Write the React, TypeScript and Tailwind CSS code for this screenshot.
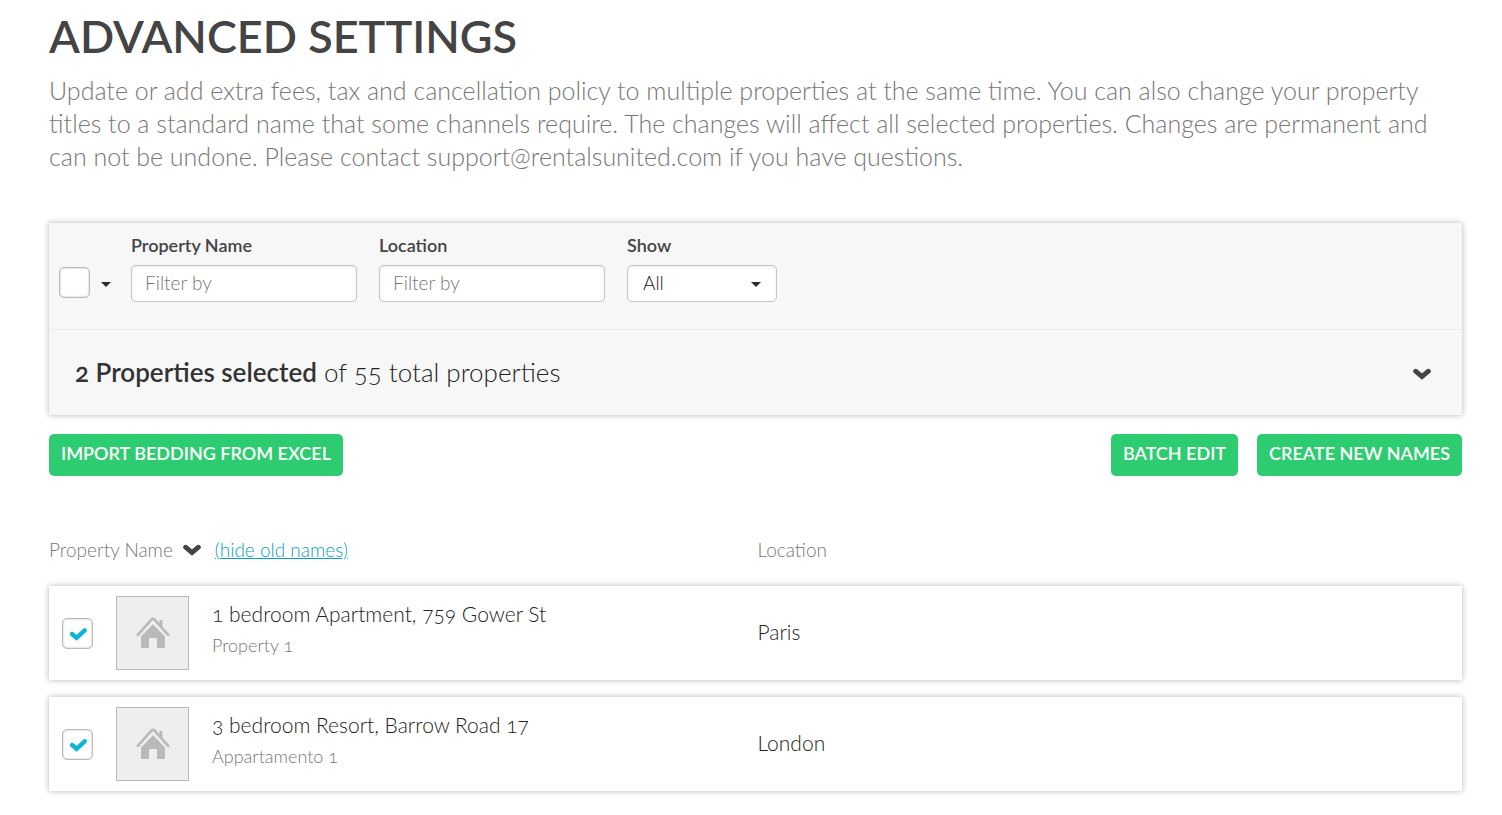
import { useState } from 'react'

type Property = {
  id: number
  name: string
  oldName: string
  location: string
}

const PROPERTIES: Property[] = [
  { id: 1, name: '1 bedroom Apartment, 759 Gower St', oldName: 'Property 1', location: 'Paris' },
  { id: 2, name: '3 bedroom Resort, Barrow Road 17', oldName: 'Appartamento 1', location: 'London' },
]

const TOTAL = 55

function Chevron() {
  return (
    <svg width="18" height="12" viewBox="0 0 18 12" fill="none" aria-hidden="true">
      <path d="M2.6 3.2 9 8.6 15.4 3.2" stroke="#444" strokeWidth="4.8" strokeLinecap="round" />
    </svg>
  )
}

function Caret() {
  return (
    <svg width="10" height="5" viewBox="0 0 10 5" aria-hidden="true">
      <path d="M0 0h10L5 5z" fill="#2b2b2b" />
    </svg>
  )
}

function HouseIcon() {
  return (
    <svg width="34" height="32" viewBox="0 0 34 32" aria-hidden="true">
      <path d="M23.5 3H26.4V12l-2.9-3.5z" fill="#b9b9b9" />
      <path d="M1.8 17.8 15.4 2.6q1.6-1.6 3.2 0L32.2 17.8" fill="none" stroke="#b9b9b9" strokeWidth="2.6" strokeLinecap="round" />
      <path d="M17 7.2 29 19.4V29.5q0 1.5-1.5 1.5H21v-9q0-1-1-1h-6q-1 0-1 1v9H6.5q-1.500 0-1.500-1.500V19.400z" fill="#b9b9b9" />
    </svg>
  )
}

function Checkbox({ label, checked, onChange }: { label: string; checked: boolean; onChange: () => void }) {
  return (
    <span className="relative block size-[31px] shrink-0">
      <input
        type="checkbox"
        aria-label={label}
        checked={checked}
        onChange={onChange}
        className="block size-full appearance-none rounded-[5px] border border-[#b9b9b9] bg-white shadow-[inset_0_0_2px_rgba(0,0,0,0.3)]"
      />
      {checked && (
        <svg className="pointer-events-none absolute inset-0" width="31" height="31" viewBox="0 0 31 31" fill="none" aria-hidden="true">
          <path d="M10 16 14.6 19.8 22.7 12.3" stroke="#0cb4d8" strokeWidth="4.4" strokeLinecap="round" />
        </svg>
      )}
    </span>
  )
}

function TextFilter({ id, label }: { id: string; label: string }) {
  return (
    <div className="w-[226px]">
      <label htmlFor={id} className="block text-[18px] leading-6 font-semibold text-[#444]">{label}</label>
      <input
        id={id}
        type="text"
        placeholder="Filter by"
        className="mt-2 block h-[37px] w-full rounded-[4px] border border-[#c4c4c4] bg-white px-[13px] pb-0.5 text-[19px] font-light text-[#444] shadow-[inset_0_1px_2px_rgba(0,0,0,0.08)] placeholder:text-[#777]"
      />
    </div>
  )
}

function GreenButton({ children }: { children: string }) {
  return (
    <button type="button" className="h-[42px] rounded-[5px] bg-[#2ecc71] px-3 pb-1 text-[18px] font-semibold whitespace-nowrap text-white uppercase">
      {children}
    </button>
  )
}

export default function App() {
  const [selected, setSelected] = useState<number[]>([1, 2])
  const [showOld, setShowOld] = useState(true)

  const toggle = (id: number) =>
    setSelected((s) => (s.includes(id) ? s.filter((x) => x !== id) : [...s, id]))

  return (
    <main className="bg-white pr-10 pl-[49px] font-['Lato',sans-serif] text-[#222] oldstyle-nums">
      <h1 className="pt-1.5 text-[45px] leading-[60px] font-semibold text-[#444] uppercase">Advanced settings</h1>
      <p className="mt-2 text-[25px] leading-[33px] font-light text-[#777]">
        Update or add extra fees, tax and cancellation policy to multiple properties at the same time. You can also
        change your property titles to a standard name that some channels require. The changes will affect all selected
        properties. Changes are permanent and can not be undone. Please contact support@rentalsunited.com if you have
        questions.
      </p>

      {/* Filters */}
      <section className="mt-[50px] bg-[#f7f7f7] shadow-[0_0_6px_rgba(0,0,0,0.3)]">
        <div className="flex h-[107px] items-start border-b border-[#ebebeb] pt-2.5 pl-2.5">
          <div className="mt-[34px] flex w-[72px] items-center gap-[11px]">
            <Checkbox label="Select all properties" checked={false} onChange={() => setSelected(PROPERTIES.map((p) => p.id))} />
            <button type="button" aria-label="Selection options" className="pt-1"><Caret /></button>
          </div>
          <div className="flex gap-[22px]">
            <TextFilter id="filter-name" label="Property Name" />
            <TextFilter id="filter-location" label="Location" />
            <div className="w-[150px]">
              <label htmlFor="filter-show" className="block text-[18px] leading-6 font-semibold text-[#444]">Show</label>
              <div className="relative mt-2">
                <select
                  id="filter-show"
                  className="block h-[37px] w-full appearance-none rounded-[5px] border border-[#c4c4c4] bg-white px-[15px] text-[19px] font-light shadow-[inset_0_1px_2px_rgba(0,0,0,0.08)]"
                >
                  <option>All</option>
                  <option>Selected</option>
                </select>
                <span className="pointer-events-none absolute top-[17px] right-4"><Caret /></span>
              </div>
            </div>
          </div>
        </div>
        <div className="flex h-[85px] items-center justify-between pr-[31px] pl-[26px]">
          <p className="text-[26px] font-light">
            <strong className="font-semibold text-[#333]">{selected.length} Properties selected</strong> of {TOTAL} total properties
          </p>
          <button type="button" aria-label="Show selected properties" className="pt-0.5"><Chevron /></button>
        </div>
      </section>

      {/* Actions */}
      <div className="mt-[19px] flex items-center justify-between">
        <GreenButton>Import bedding from Excel</GreenButton>
        <div className="flex gap-[19px]">
          <GreenButton>Batch edit</GreenButton>
          <GreenButton>Create new names</GreenButton>
        </div>
      </div>

      <table className="mt-[43px] w-full border-separate border-spacing-x-0 border-spacing-y-[17px] text-left">
        <thead>
          <tr className="h-[33px] align-top text-[19px] leading-7 text-[#777]">
            <th className="w-1/2 p-0 font-light">
              <div className="flex items-center">
                Property Name
                <button type="button" aria-label="Sort by name" className="ml-2.5"><Chevron /></button>
                <a
                  href="#names"
                  className="ml-3.5 text-[#0d9dc4] underline"
                  onClick={(e) => { e.preventDefault(); setShowOld(!showOld) }}
                >
                  ({showOld ? 'hide' : 'show'} old names)
                </a>
              </div>
            </th>
            <th className="w-1/2 p-0 pl-0.5 font-light">Location</th>
          </tr>
        </thead>
        <tbody>
          {PROPERTIES.map((p) => (
            <tr key={p.id} className="h-[94px] bg-white shadow-[0_0_6px_rgba(0,0,0,0.3)]">
              <td className="p-0 pl-[13px]">
                <div className="flex items-center">
                  <Checkbox label={p.name} checked={selected.includes(p.id)} onChange={() => toggle(p.id)} />
                  <div className="ml-[23px] flex h-[74px] w-[73px] items-center justify-center border border-[#b9b9b9] bg-[#eee]">
                    <HouseIcon />
                  </div>
                  <div className="ml-[23px] pb-2">
                    <div className="text-[21px] leading-8 font-light">{p.name}</div>
                    {showOld && <div className="text-[18px] leading-[30px] font-light text-[#777]">{p.oldName}</div>}
                  </div>
                </div>
              </td>
              <td className="p-0 pb-0.5 pl-0.5 text-[21px] font-light">{p.location}</td>
            </tr>
          ))}
        </tbody>
      </table>
    </main>
  )
}
